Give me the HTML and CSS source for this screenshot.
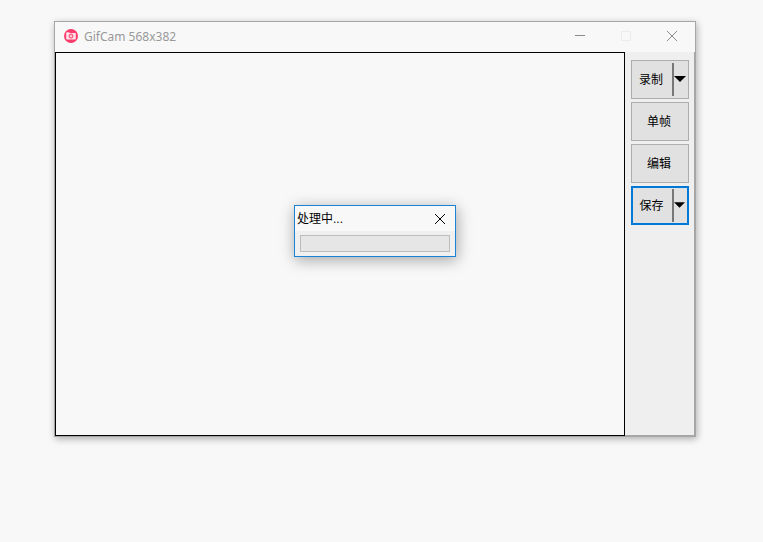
FILE: index.html
```html
<!DOCTYPE html>
<html lang="zh-CN">
<head>
    <meta charset="UTF-8">
    <meta name="viewport" content="width=device-width, initial-scale=1.0">
    <title>GifCam</title>
    <link rel="stylesheet" href="styles.css">
</head>
<body>
    <main class="window">
        <header class="titlebar">
            <svg class="logo" width="14" height="14" viewBox="0 0 14 14">
                <circle cx="7" cy="7" r="7" fill="#fb3b6b"/>
                <path d="M3 3.300h2l.6.7H11a.8.8 0 0 1 .8.8v4.900a.8.8 0 0 1-.8.8H3a.8.8 0 0 1-.8-.8V4.100a.8.8 0 0 1 .8-.8z" fill="#ffe3ea"/>
                <circle cx="7" cy="7.100" r="2" fill="#ffc4d3" stroke="#fb3b6b" stroke-width="1"/>
            </svg>
            <h1>GifCam 568x382</h1>
            <button class="caption" aria-label="最小化">
                <svg width="10" height="10" viewBox="0 0 10 10"><path d="M0 4.500h10"/></svg>
            </button>
            <button class="caption" aria-label="最大化" disabled>
                <svg width="10" height="10" viewBox="0 0 10 10"><path d="M.5.5h9v9h-9z"/></svg>
            </button>
            <button class="caption" aria-label="关闭">
                <svg width="10" height="10" viewBox="0 0 10 10"><path d="M0 0l10 10M10 0L0 10"/></svg>
            </button>
        </header>
        <div class="content">
            <section class="viewport"></section>
            <nav class="tools">
                <div class="split">
                    <button class="action">录制</button>
                    <button class="arrow" aria-label="录制选项">
                        <svg width="12" height="6" viewBox="0 0 12 6"><path d="M0 0h12L6 6z"/></svg>
                    </button>
                </div>
                <button class="tool">单帧</button>
                <button class="tool">编辑</button>
                <div class="split focused">
                    <button class="action">保存</button>
                    <button class="arrow" aria-label="保存选项">
                        <svg width="12" height="6" viewBox="0 0 12 6"><path d="M0 0h12L6 6z"/></svg>
                    </button>
                </div>
            </nav>
        </div>
        <div class="dialog" role="dialog" aria-labelledby="dialog_title">
            <div class="dialog-title">
                <label id="dialog_title" for="progress">处理中...</label>
                <button class="dialog-close" aria-label="关闭">
                    <svg width="10" height="10" viewBox="0 0 10 10"><path d="M0 0l10 10M10 0L0 10"/></svg>
                </button>
            </div>
            <div class="dialog-body">
                <progress id="progress" value="0" max="100"></progress>
            </div>
        </div>
    </main>
</body>
</html>
```

FILE: styles.css
```css
* {
    box-sizing: border-box;
}
body {
    display: flex;
    min-height: 100vh;
    margin: 0;
    padding: 21px 67px 105px 54px;
    background: #f8f8f8;
    font: 12px/16px "Liberation Sans", "Noto Sans CJK SC", sans-serif;
    color: #000;
}
button {
    display: flex;
    align-items: center;
    justify-content: center;
    margin: 0;
    padding: 0;
    border: 0;
    background: none;
    font: inherit;
    color: inherit;
}
.window {
    position: relative;
    flex: 1;
    display: flex;
    flex-direction: column;
    border: 1px solid #a6a6a6;
    background: #f8f8f8;
    box-shadow: 1px 2px 7px rgba(0, 0, 0, 0.3);
}
.titlebar {
    display: flex;
    align-items: center;
    height: 30px;
    padding-left: 9px;
}
.titlebar h1 {
    flex: 1;
    margin: 0 0 0 6px;
    font: 12px/16px "Noto Sans", sans-serif;
    color: #999;
}
.logo {
    margin-bottom: 2px;
}
.caption {
    width: 46px;
    height: 30px;
    padding-bottom: 2px;
}
.caption path {
    fill: none;
    stroke: #8c8c8c;
}
.caption:disabled path {
    stroke: #ececec;
}
.content {
    flex: 1;
    display: flex;
    background: #efefef;
}
.viewport {
    flex: 1;
    border: 1px solid #000;
    background: #f8f8f8;
}
.tools {
    display: flex;
    flex-direction: column;
    gap: 3px;
    width: 70px;
    padding: 8px 6px;
    border-right: 1px solid #a6a6a6;
    border-bottom: 1px solid #a6a6a6;
}
.tool,
.split {
    width: 58px;
    height: 39px;
    border: 1px solid #adadad;
    background: #e1e1e1;
}
.tool,
.action {
    padding-right: 2px;
}
.split {
    display: flex;
    align-items: center;
}
.split.focused {
    border: 2px solid #0078d7;
}
.action {
    flex: 1;
    height: 33px;
}
.arrow {
    width: 16px;
    height: 33px;
    padding: 0 2px 2px 0;
    border-left: 2px solid #777;
}
.focused .arrow {
    width: 15px;
}
.dialog {
    position: absolute;
    top: 183px;
    left: calc(50% - 81px);
    width: 162px;
    border: 1px solid #1883d7;
    background: #f0f0f0;
    box-shadow: 1px 3px 14px rgba(0, 0, 0, 0.35);
}
.dialog-title {
    display: flex;
    align-items: center;
    justify-content: space-between;
    height: 25px;
    padding-left: 2px;
    background: #f8f8f8;
}
.dialog-close {
    width: 30px;
    height: 25px;
}
.dialog-close path {
    stroke: #000;
}
.dialog-body {
    padding: 4px 5px;
}
progress {
    display: block;
    width: 100%;
    height: 17px;
    border: 1px solid #bcbcbc;
    background: #e6e6e6;
    appearance: none;
}
progress::-webkit-progress-bar {
    background: #e6e6e6;
}
```
